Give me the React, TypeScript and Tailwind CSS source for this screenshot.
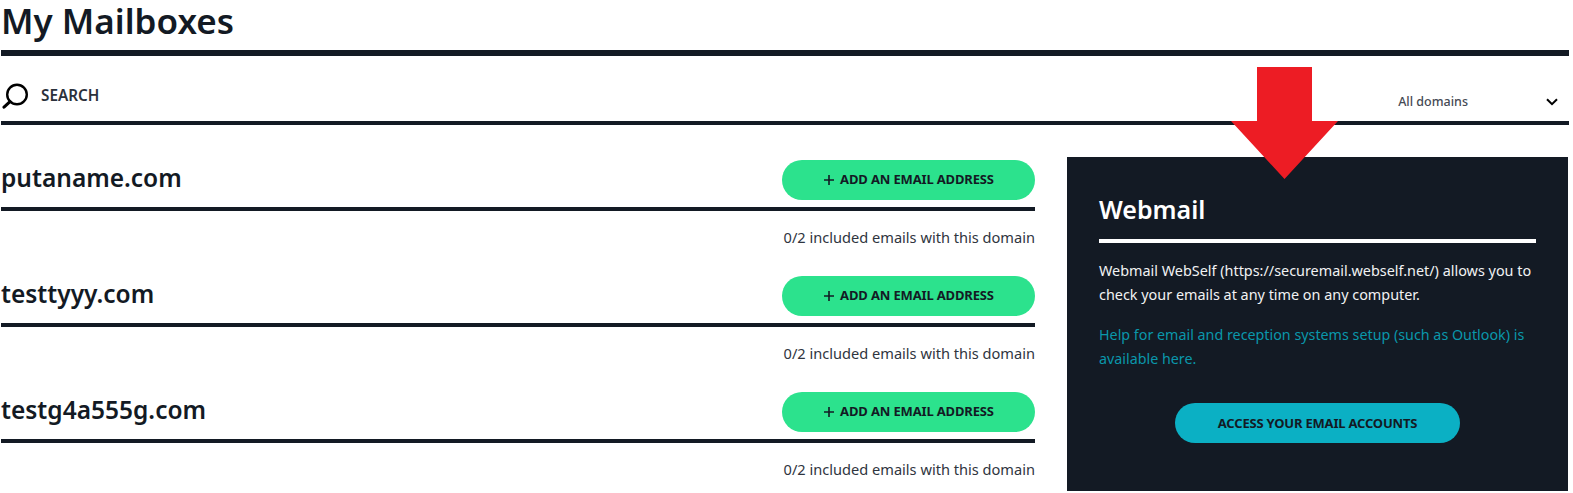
import React from "react";

const font = { fontFamily: '"Noto Sans", sans-serif' };

function Domain({ name }: { name: string }) {
  return (
    <section className="h-[116px]">
      <div className="box-border flex h-[51px] items-start justify-between border-b-4 border-[#131a24]">
        <h2 className="text-[24.5px] font-semibold leading-[36px] text-[#131a24]">{name}</h2>
        <button className="flex h-10 w-[253px] items-center justify-center gap-[5px] rounded-full bg-[#2ce28d] pb-px text-[13px] font-bold text-[#131a24]">
          <svg width="12" height="12" viewBox="0 0 12 12" fill="none" stroke="#131a24" strokeWidth="1.6">
            <path d="M6 1v10M1 6h10" />
          </svg>
          <span className="tracking-[-0.15px]">ADD AN EMAIL ADDRESS</span>
        </button>
      </div>
      <p className="mt-[15px] text-right text-[14.6px] leading-[22px] text-[#2f3540]">0/2 included emails with this domain</p>
    </section>
  );
}

export default function App() {
  return (
    <div className="relative h-[493px] overflow-hidden bg-white pl-px pr-1" style={font}>
      <h1 className="h-[50px] text-[35px] font-semibold leading-[41px] text-[#131a24]">My Mailboxes</h1>
      <div className="h-[6px] bg-[#131a24]" />
      <div className="flex h-[65px] items-center justify-between pr-[11px] pt-[14px]">
        <div className="flex items-center gap-[13px] pl-px">
          <svg width="26" height="26" viewBox="0 0 26 26" fill="none" stroke="#000" strokeWidth="2.4" strokeLinecap="round">
            <circle cx="15" cy="11.5" r="9.8" />
            <path d="M8 18.6 2 24.2" strokeWidth="3" />
          </svg>
          <span className="text-[15.3px] font-semibold text-[#2b313b]">SEARCH</span>
        </div>
        <div className="mt-[13px] flex items-center gap-[78px]">
          <span className="text-[12.5px] font-medium text-[#454a54]">All domains</span>
          <svg width="12" height="8" viewBox="0 0 12 8" fill="none" stroke="#000" strokeWidth="2">
            <path d="M1 1.2 6 6.2l5-5" />
          </svg>
        </div>
      </div>
      <div className="h-1 bg-[#131a24]" />
      <div className="mt-[32px] flex gap-8">
        <div className="w-[1034px] pt-[3px]">
          <Domain name="putaname.com" />
          <Domain name="testtyyy.com" />
          <Domain name="testg4a555g.com" />
        </div>
        <aside className="h-[334px] w-[501px] bg-[#131a24] px-8 pt-[33px] text-[#f1f2f3]">
          <h2 className="box-content h-[49px] border-b-4 border-white text-[25px] font-semibold leading-[38px] text-white">Webmail</h2>
          <p className="mt-4 text-[14.4px] leading-6">Webmail WebSelf (https://securemail.webself.net/) allows you to check your emails at any time on any computer.</p>
          <p className="mt-4 text-[14.3px] leading-6 text-[#0a97ab]">Help for email and reception systems setup (such as Outlook) is available here.</p>
          <div className="mt-[32px] flex justify-center">
            <button className="h-10 w-[285px] rounded-full bg-[#0bb0c4] pt-px text-[13px] font-bold tracking-[-0.2px] text-[#131a24]">ACCESS YOUR EMAIL ACCOUNTS</button>
          </div>
        </aside>
      </div>
      <svg className="absolute left-[1231px] top-[67px]" width="107" height="112" viewBox="0 0 107 112">
        <path d="M26 0h55v54h26L53.5 112 0 54h26z" fill="#ed1c24" />
      </svg>
    </div>
  );
}
